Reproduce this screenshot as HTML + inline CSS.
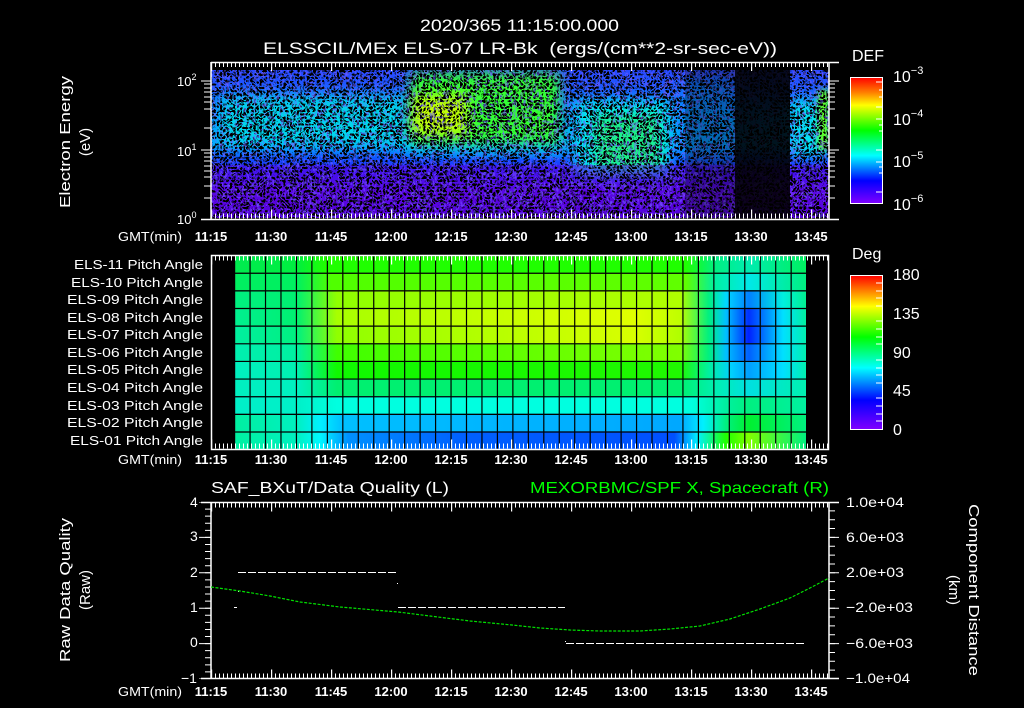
<!DOCTYPE html>
<html><head><meta charset="utf-8"><style>
html,body{margin:0;padding:0;background:#000;width:1024px;height:708px;overflow:hidden}
svg{display:block}
text{font-family:"Liberation Sans",sans-serif;fill:#fff}
</style></head><body>
<svg width="1024" height="708" viewBox="0 0 1024 708" xmlns="http://www.w3.org/2000/svg">
<defs>
<linearGradient id="cbDEF" x1="0" y1="0" x2="0" y2="1">
<stop offset="0" stop-color="#ff0000"/><stop offset="0.12" stop-color="#ff8000"/><stop offset="0.22" stop-color="#ffff00"/><stop offset="0.42" stop-color="#00ff00"/><stop offset="0.62" stop-color="#00ffff"/><stop offset="0.82" stop-color="#0000ff"/><stop offset="1" stop-color="#8000ff"/></linearGradient>
<linearGradient id="cbDeg" x1="0" y1="0" x2="0" y2="1">
<stop offset="0" stop-color="#ff0000"/><stop offset="0.1" stop-color="#ff8000"/><stop offset="0.2" stop-color="#ffff00"/><stop offset="0.4" stop-color="#00ff00"/><stop offset="0.6" stop-color="#00ffff"/><stop offset="0.81" stop-color="#0000ff"/><stop offset="1" stop-color="#8000ff"/></linearGradient>
<linearGradient id="specBase" x1="0" y1="70" x2="0" y2="218" gradientUnits="userSpaceOnUse">
<stop offset="0" stop-color="#2848ff"/><stop offset="0.15" stop-color="#1a5cff"/><stop offset="0.3" stop-color="#0090ff"/><stop offset="0.5" stop-color="#00a8ff"/><stop offset="0.6" stop-color="#1050ff"/><stop offset="0.7" stop-color="#3020f8"/><stop offset="0.82" stop-color="#5a10e8"/><stop offset="1" stop-color="#5000d8"/></linearGradient>
<filter id="b6" x="-30%" y="-30%" width="160%" height="160%"><feGaussianBlur stdDeviation="6"/></filter>
<filter id="b3" x="-30%" y="-30%" width="160%" height="160%"><feGaussianBlur stdDeviation="3"/></filter>
<filter id="nz1" filterUnits="userSpaceOnUse" x="211" y="70" width="618" height="150">
<feTurbulence type="turbulence" baseFrequency="0.35 0.3" numOctaves="1" seed="3"/>
<feColorMatrix values="0 0 0 0 0 0 0 0 0 0 0 0 0 0 0 3 0 0 0 -0.2"/>
<feComponentTransfer><feFuncA type="discrete" tableValues="0 0 0 0 0.9"/></feComponentTransfer></filter>
<filter id="nz2" filterUnits="userSpaceOnUse" x="211" y="70" width="618" height="150">
<feTurbulence type="turbulence" baseFrequency="0.3 0.3" numOctaves="1" seed="7"/>
<feColorMatrix values="0 0 0 0 0 0 0 0 0 0 0 0 0 0 0 3 0 0 0 -0.1"/>
<feComponentTransfer><feFuncA type="discrete" tableValues="0 0 1 1"/></feComponentTransfer></filter>
<filter id="nz4" filterUnits="userSpaceOnUse" x="211" y="70" width="618" height="150">
<feTurbulence type="turbulence" baseFrequency="0.3 0.25" numOctaves="1" seed="19"/>
<feColorMatrix values="0 0 0 0 0.15 0 0 0 0 0.1 0 0 0 0 1 3 0 0 0 -0.2"/>
<feComponentTransfer><feFuncA type="discrete" tableValues="0 0 0 1"/></feComponentTransfer></filter>
<filter id="nz3" filterUnits="userSpaceOnUse" x="211" y="70" width="618" height="150">
<feTurbulence type="turbulence" baseFrequency="0.4 0.1" numOctaves="1" seed="11"/>
<feColorMatrix values="0 0 0 0 0.2 0 0 0 0 0.1 0 0 0 0 1 3 0 0 0 -0.3"/>
<feComponentTransfer><feFuncA type="discrete" tableValues="0 0 0 0.5"/></feComponentTransfer></filter>
<clipPath id="spClip"><rect x="211" y="70" width="618" height="148"/></clipPath>
<linearGradient id="r1" x1="234" x2="806" gradientUnits="userSpaceOnUse"><stop offset="0" stop-color="#00ec50"/><stop offset="0.11" stop-color="#00ee40"/><stop offset="0.16" stop-color="#20ff00"/><stop offset="0.79" stop-color="#20ff00"/><stop offset="0.84" stop-color="#00f080"/><stop offset="0.9" stop-color="#00ecb0"/><stop offset="1" stop-color="#00f060"/></linearGradient>
<linearGradient id="r2" x1="234" x2="806" gradientUnits="userSpaceOnUse"><stop offset="0" stop-color="#00f060"/><stop offset="0.11" stop-color="#00f060"/><stop offset="0.17" stop-color="#50ff00"/><stop offset="0.79" stop-color="#60ff00"/><stop offset="0.84" stop-color="#00f0a0"/><stop offset="0.9" stop-color="#00e8e8"/><stop offset="1" stop-color="#00f080"/></linearGradient>
<linearGradient id="r3" x1="234" x2="806" gradientUnits="userSpaceOnUse"><stop offset="0" stop-color="#00f080"/><stop offset="0.11" stop-color="#00f070"/><stop offset="0.18" stop-color="#90ff00"/><stop offset="0.78" stop-color="#b0ff00"/><stop offset="0.83" stop-color="#00f080"/><stop offset="0.86" stop-color="#00d8ff"/><stop offset="0.9" stop-color="#0080ff"/><stop offset="0.96" stop-color="#00f0e0"/><stop offset="1" stop-color="#00f090"/></linearGradient>
<linearGradient id="r4" x1="234" x2="806" gradientUnits="userSpaceOnUse"><stop offset="0" stop-color="#00f090"/><stop offset="0.11" stop-color="#00f070"/><stop offset="0.18" stop-color="#a8ff00"/><stop offset="0.7" stop-color="#e0ff00"/><stop offset="0.78" stop-color="#c0ff00"/><stop offset="0.83" stop-color="#00f080"/><stop offset="0.86" stop-color="#00c0ff"/><stop offset="0.9" stop-color="#0030ff"/><stop offset="0.96" stop-color="#00e0ff"/><stop offset="1" stop-color="#00f0a0"/></linearGradient>
<linearGradient id="r5" x1="234" x2="806" gradientUnits="userSpaceOnUse"><stop offset="0" stop-color="#00f0a0"/><stop offset="0.11" stop-color="#00f080"/><stop offset="0.18" stop-color="#90ff00"/><stop offset="0.7" stop-color="#d8ff00"/><stop offset="0.78" stop-color="#b0ff00"/><stop offset="0.83" stop-color="#00f080"/><stop offset="0.86" stop-color="#00c0ff"/><stop offset="0.9" stop-color="#0020ff"/><stop offset="0.96" stop-color="#00e0ff"/><stop offset="1" stop-color="#00f0b0"/></linearGradient>
<linearGradient id="r6" x1="234" x2="806" gradientUnits="userSpaceOnUse"><stop offset="0" stop-color="#00f0b0"/><stop offset="0.11" stop-color="#00f0a0"/><stop offset="0.18" stop-color="#40ff00"/><stop offset="0.78" stop-color="#80ff00"/><stop offset="0.83" stop-color="#00f080"/><stop offset="0.86" stop-color="#00c0ff"/><stop offset="0.9" stop-color="#0060ff"/><stop offset="0.96" stop-color="#00e0ff"/><stop offset="1" stop-color="#00f0b0"/></linearGradient>
<linearGradient id="r7" x1="234" x2="806" gradientUnits="userSpaceOnUse"><stop offset="0" stop-color="#00f0c0"/><stop offset="0.11" stop-color="#00f0b0"/><stop offset="0.18" stop-color="#10f800"/><stop offset="0.78" stop-color="#20f800"/><stop offset="0.83" stop-color="#00f0a0"/><stop offset="0.87" stop-color="#00d0ff"/><stop offset="0.9" stop-color="#00a0ff"/><stop offset="0.96" stop-color="#00e0ff"/><stop offset="1" stop-color="#00f0b0"/></linearGradient>
<linearGradient id="r8" x1="234" x2="806" gradientUnits="userSpaceOnUse"><stop offset="0" stop-color="#00f0c0"/><stop offset="0.11" stop-color="#00f0c0"/><stop offset="0.18" stop-color="#00f070"/><stop offset="0.78" stop-color="#00f070"/><stop offset="0.84" stop-color="#00f0b0"/><stop offset="0.9" stop-color="#00e0e0"/><stop offset="1" stop-color="#00f0b0"/></linearGradient>
<linearGradient id="r9" x1="234" x2="806" gradientUnits="userSpaceOnUse"><stop offset="0" stop-color="#00f0c8"/><stop offset="0.11" stop-color="#00f0c8"/><stop offset="0.18" stop-color="#00ffe0"/><stop offset="0.8" stop-color="#00ffe0"/><stop offset="0.86" stop-color="#00f0a0"/><stop offset="0.9" stop-color="#00f080"/><stop offset="1" stop-color="#00f0a0"/></linearGradient>
<linearGradient id="r10" x1="234" x2="806" gradientUnits="userSpaceOnUse"><stop offset="0" stop-color="#00f0a0"/><stop offset="0.11" stop-color="#00f0c0"/><stop offset="0.15" stop-color="#00f0ff"/><stop offset="0.19" stop-color="#00c0ff"/><stop offset="0.78" stop-color="#00a8ff"/><stop offset="0.82" stop-color="#00f0ff"/><stop offset="0.86" stop-color="#00f080"/><stop offset="0.9" stop-color="#00f030"/><stop offset="1" stop-color="#00f080"/></linearGradient>
<linearGradient id="r11" x1="234" x2="806" gradientUnits="userSpaceOnUse"><stop offset="0" stop-color="#00f0a0"/><stop offset="0.11" stop-color="#00f0c0"/><stop offset="0.15" stop-color="#00f8ff"/><stop offset="0.2" stop-color="#0090ff"/><stop offset="0.4" stop-color="#0060ff"/><stop offset="0.77" stop-color="#0050ff"/><stop offset="0.81" stop-color="#00f0ff"/><stop offset="0.86" stop-color="#20ff00"/><stop offset="0.9" stop-color="#80ff00"/><stop offset="1" stop-color="#00f080"/></linearGradient>
</defs>

<text x="420" y="31" font-size="17" textLength="199" lengthAdjust="spacingAndGlyphs">2020/365 11:15:00.000</text>
<text x="263" y="54" font-size="17" textLength="514" lengthAdjust="spacingAndGlyphs" xml:space="preserve">ELSSCIL/MEx ELS-07 LR-Bk  (ergs/(cm**2-sr-sec-eV))</text>

<g clip-path="url(#spClip)">
<rect x="211" y="70" width="618" height="148" fill="url(#specBase)"/>
<rect x="220" y="95" width="185" height="50" fill="#00e0e8" filter="url(#b6)" opacity="0.85"/>
<rect x="405" y="140" width="160" height="15" fill="#00c8ff" filter="url(#b6)" opacity="0.7"/>
<rect x="575" y="100" width="95" height="75" fill="#00e8f0" filter="url(#b6)"/>
<rect x="595" y="115" width="65" height="55" fill="#20f070" filter="url(#b6)" opacity="0.8"/>
<rect x="410" y="72" width="150" height="72" fill="#30ff30" filter="url(#b6)"/>
<rect x="412" y="95" width="55" height="40" fill="#d0ff00" filter="url(#b6)" opacity="0.9"/>
<rect x="680" y="80" width="55" height="80" fill="#0090ff" filter="url(#b6)" opacity="0.6"/>
<rect x="790" y="100" width="39" height="55" fill="#00e0f0" filter="url(#b6)"/>
<rect x="818" y="90" width="11" height="60" fill="#60ff20" filter="url(#b3)"/>
<rect x="211" y="165" width="618" height="55" fill="#5a00e0" opacity="0.5"/>
<rect x="211" y="70" width="618" height="150" filter="url(#nz3)"/>
<rect x="211" y="168" width="618" height="52" filter="url(#nz2)"/>
<rect x="211" y="160" width="618" height="60" filter="url(#nz4)" opacity="0.6"/>
<rect x="211" y="70" width="618" height="100" filter="url(#nz1)" opacity="0.6"/>
<rect x="735" y="70" width="55" height="148" fill="#000" opacity="0.88"/>
<rect x="685" y="70" width="50" height="148" fill="#000" opacity="0.3"/>
</g>
<g stroke="#fff" fill="none">
<line x1="211" y1="62.5" x2="839" y2="62.5" stroke-width="1.5"/>
<line x1="201" y1="219.5" x2="839" y2="219.5" stroke-width="1.5"/>
<line x1="211" y1="62" x2="211" y2="220" stroke-width="1.5"/>
<line x1="829" y1="62" x2="829" y2="220" stroke-width="1.5"/>
<line x1="211" y1="65" x2="829" y2="65" stroke-width="4" stroke-dasharray="1 3"/>
<line x1="211" y1="67" x2="829" y2="67" stroke-width="8" stroke-dasharray="1.2 58.8"/>
<line x1="211" y1="216" x2="829" y2="216" stroke-width="5" stroke-dasharray="1 3"/>
<line x1="211" y1="214" x2="829" y2="214" stroke-width="9" stroke-dasharray="1.2 58.8"/>
<path d="M201 81H211M201 150H211M204 171H211M204 128H211M204 109H211M204 97H211M204 92H211M204 88H211M204 84H211M204 198H211M204 186H211M204 177H211M204 166H211M204 161H211M204 157H211M204 153H211M204 102H211"/>
<path d="M829 81H839M829 150H839M829 171H835M829 128H835M829 109H835M829 97H835M829 92H835M829 88H835M829 84H835M829 198H835M829 186H835M829 177H835M829 166H835M829 161H835M829 157H835M829 153H835M829 102H835"/>
</g>
<g font-size="13">
<text x="177" y="86">10<tspan font-size="9" dy="-6">2</tspan></text>
<text x="177" y="156">10<tspan font-size="9" dy="-6">1</tspan></text>
<text x="177" y="224">10<tspan font-size="9" dy="-6">0</tspan></text>
</g>
<text transform="translate(70,142) rotate(-90)" font-size="15" text-anchor="middle" textLength="132" lengthAdjust="spacingAndGlyphs">Electron Energy</text>
<text transform="translate(90,142) rotate(-90)" font-size="15" text-anchor="middle">(eV)</text>

<text x="852" y="61" font-size="16">DEF</text>
<rect x="850.5" y="77.5" width="32" height="126" fill="url(#cbDEF)" stroke="#fff"/>
<path d="M876 82H882M879 90H882M879 97H882M876 107H882M876 119H882M879 125H882M879 131H882M876 150H882M876 162H882M879 167H882M879 173H882M876 192H882" stroke="#fff"/>
<g font-size="16">
<text x="893" y="82">10<tspan font-size="11" dy="-8">−3</tspan></text>
<text x="893" y="125">10<tspan font-size="11" dy="-8">−4</tspan></text>
<text x="893" y="167">10<tspan font-size="11" dy="-8">−5</tspan></text>
<text x="893" y="210">10<tspan font-size="11" dy="-8">−6</tspan></text>
</g>

<g font-size="13" font-weight="bold" text-anchor="middle">
<text x="211" y="241">11:15</text><text x="271" y="241">11:30</text><text x="331" y="241">11:45</text><text x="391" y="241">12:00</text><text x="451" y="241">12:15</text><text x="511" y="241">12:30</text><text x="571" y="241">12:45</text><text x="631" y="241">13:00</text><text x="691" y="241">13:15</text><text x="751" y="241">13:30</text><text x="811" y="241">13:45</text>
</g>
<text x="118" y="241" font-size="13" textLength="64" lengthAdjust="spacingAndGlyphs">GMT(min)</text>

<g>
<rect x="234" y="255" width="572" height="17.7" fill="url(#r1)"/>
<rect x="234" y="272.6" width="572" height="17.7" fill="url(#r2)"/>
<rect x="234" y="290.3" width="572" height="17.7" fill="url(#r3)"/>
<rect x="234" y="307.9" width="572" height="17.7" fill="url(#r4)"/>
<rect x="234" y="325.6" width="572" height="17.7" fill="url(#r5)"/>
<rect x="234" y="343.2" width="572" height="17.7" fill="url(#r6)"/>
<rect x="234" y="360.8" width="572" height="17.7" fill="url(#r7)"/>
<rect x="234" y="378.5" width="572" height="17.7" fill="url(#r8)"/>
<rect x="234" y="396.1" width="572" height="17.7" fill="url(#r9)"/>
<rect x="234" y="413.8" width="572" height="17.7" fill="url(#r10)"/>
<rect x="234" y="431.4" width="572" height="17.6" fill="url(#r11)"/>
<line x1="234" y1="352" x2="806" y2="352" stroke="#000" stroke-width="194" stroke-dasharray="1.2 14.26"/>
<line x1="520" y1="255" x2="520" y2="449" stroke="#000" stroke-width="572" stroke-dasharray="1.2 16.44"/>
</g>
<g stroke="#fff" fill="none">
<rect x="211.5" y="255.5" width="617" height="194" stroke-width="1.5"/>
<line x1="211" y1="258" x2="829" y2="258" stroke-width="5" stroke-dasharray="1 3"/>
<line x1="211" y1="260" x2="829" y2="260" stroke-width="9" stroke-dasharray="1.2 58.8"/>
<line x1="211" y1="446" x2="829" y2="446" stroke-width="5" stroke-dasharray="1 3"/>
<line x1="211" y1="444" x2="829" y2="444" stroke-width="9" stroke-dasharray="1.2 58.8"/>
</g>
<g font-size="13" text-anchor="end">
<text x="203" y="269" textLength="129" lengthAdjust="spacingAndGlyphs">ELS-11 Pitch Angle</text>
<text x="203" y="287" textLength="132" lengthAdjust="spacingAndGlyphs">ELS-10 Pitch Angle</text>
<text x="203" y="304" textLength="136" lengthAdjust="spacingAndGlyphs">ELS-09 Pitch Angle</text>
<text x="203" y="322" textLength="136" lengthAdjust="spacingAndGlyphs">ELS-08 Pitch Angle</text>
<text x="203" y="339" textLength="136" lengthAdjust="spacingAndGlyphs">ELS-07 Pitch Angle</text>
<text x="203" y="357" textLength="136" lengthAdjust="spacingAndGlyphs">ELS-06 Pitch Angle</text>
<text x="203" y="374" textLength="136" lengthAdjust="spacingAndGlyphs">ELS-05 Pitch Angle</text>
<text x="203" y="392" textLength="136" lengthAdjust="spacingAndGlyphs">ELS-04 Pitch Angle</text>
<text x="203" y="410" textLength="136" lengthAdjust="spacingAndGlyphs">ELS-03 Pitch Angle</text>
<text x="203" y="427" textLength="136" lengthAdjust="spacingAndGlyphs">ELS-02 Pitch Angle</text>
<text x="203" y="445" textLength="133" lengthAdjust="spacingAndGlyphs">ELS-01 Pitch Angle</text>
</g>
<text x="852" y="259" font-size="16">Deg</text>
<rect x="850.5" y="275.5" width="32" height="154" fill="url(#cbDeg)" stroke="#fff"/>
<path d="M876 283H882M876 291H882M876 298H882M876 306H882M876 321H882M876 329H882M876 337H882M876 344H882M876 360H882M876 368H882M876 375H882M876 383H882M876 398H882M876 406H882M876 414H882M876 421H882" stroke="#fff"/>
<g font-size="16">
<text x="893" y="280">180</text><text x="893" y="319">135</text><text x="893" y="358">90</text><text x="893" y="396">45</text><text x="893" y="435">0</text>
</g>
<g font-size="13" font-weight="bold" text-anchor="middle">
<text x="211" y="464">11:15</text><text x="271" y="464">11:30</text><text x="331" y="464">11:45</text><text x="391" y="464">12:00</text><text x="451" y="464">12:15</text><text x="511" y="464">12:30</text><text x="571" y="464">12:45</text><text x="631" y="464">13:00</text><text x="691" y="464">13:15</text><text x="751" y="464">13:30</text><text x="811" y="464">13:45</text>
</g>
<text x="118" y="464" font-size="13" textLength="64" lengthAdjust="spacingAndGlyphs">GMT(min)</text>

<text x="211" y="493" font-size="16" textLength="238" lengthAdjust="spacingAndGlyphs">SAF_BXuT/Data Quality (L)</text>
<text x="829" y="493" font-size="16" style="fill:#00ff00" text-anchor="end" textLength="299" lengthAdjust="spacingAndGlyphs">MEXORBMC/SPF X, Spacecraft (R)</text>
<g stroke="#fff" fill="none">
<line x1="201" y1="502.5" x2="839" y2="502.5" stroke-width="1.5"/>
<line x1="201" y1="678.5" x2="839" y2="678.5" stroke-width="1.5"/>
<line x1="211" y1="502" x2="211" y2="679" stroke-width="1.5"/>
<line x1="829" y1="502" x2="829" y2="679" stroke-width="1.5"/>
<line x1="211" y1="505" x2="829" y2="505" stroke-width="5" stroke-dasharray="1 3"/>
<line x1="211" y1="507" x2="829" y2="507" stroke-width="9" stroke-dasharray="1.2 58.8"/>
<line x1="211" y1="676" x2="829" y2="676" stroke-width="5" stroke-dasharray="1 3"/>
<line x1="211" y1="674" x2="829" y2="674" stroke-width="9" stroke-dasharray="1.2 58.8"/>
<line x1="205" y1="502" x2="205" y2="679" stroke-width="12" stroke-dasharray="1 34.4" stroke-dashoffset="0.5"/>
<line x1="208" y1="502" x2="208" y2="679" stroke-width="6" stroke-dasharray="1 6.08" stroke-dashoffset="0.5"/>
<line x1="834" y1="502" x2="834" y2="679" stroke-width="10" stroke-dasharray="1 34.4" stroke-dashoffset="0.5"/>
<line x1="832" y1="502" x2="832" y2="679" stroke-width="6" stroke-dasharray="1 7.85" stroke-dashoffset="0.5"/>
<line x1="238" y1="572.5" x2="397" y2="572.5" stroke-dasharray="8 2"/>
<line x1="398" y1="607.5" x2="565" y2="607.5" stroke-dasharray="8 2"/>
<line x1="566" y1="643.5" x2="806" y2="643.5" stroke-dasharray="8 2"/>
<path d="M234 607.5H237M397 583.5H398M565 641.5H566M238 591.5H239"/>
</g>
<polyline fill="none" stroke="#00e000" stroke-width="1.2" stroke-dasharray="3 1.5" points="211,587 240,591 270,596 300,602 340,607 398,612 430,616 470,621 512,625 540,628 570,630 600,631 640,631 670,629 700,626 730,619 760,609 790,598 810,588 829,578"/>
<g font-size="14">
<text x="190" y="507">4</text><text x="190" y="541">3</text><text x="190" y="577">2</text><text x="190" y="612">1</text><text x="190" y="647">0</text><text x="181" y="683">−1</text>
</g>
<g font-size="14">
<text x="846" y="507" textLength="58" lengthAdjust="spacingAndGlyphs">1.0e+04</text>
<text x="846" y="542" textLength="58" lengthAdjust="spacingAndGlyphs">6.0e+03</text>
<text x="846" y="577" textLength="58" lengthAdjust="spacingAndGlyphs">2.0e+03</text>
<text x="846" y="612" textLength="67" lengthAdjust="spacingAndGlyphs">−2.0e+03</text>
<text x="846" y="648" textLength="67" lengthAdjust="spacingAndGlyphs">−6.0e+03</text>
<text x="846" y="683" textLength="64" lengthAdjust="spacingAndGlyphs">−1.0e+04</text>
</g>
<text transform="translate(70,590) rotate(-90)" font-size="15" text-anchor="middle" textLength="144" lengthAdjust="spacingAndGlyphs">Raw Data Quality</text>
<text transform="translate(90,590) rotate(-90)" font-size="15" text-anchor="middle">(Raw)</text>
<text transform="translate(969,590) rotate(90)" font-size="15" text-anchor="middle" textLength="172" lengthAdjust="spacingAndGlyphs">Component Distance</text>
<text transform="translate(949,590) rotate(90)" font-size="15" text-anchor="middle">(km)</text>
<g font-size="13" font-weight="bold" text-anchor="middle">
<text x="211" y="696">11:15</text><text x="271" y="696">11:30</text><text x="331" y="696">11:45</text><text x="391" y="696">12:00</text><text x="451" y="696">12:15</text><text x="511" y="696">12:30</text><text x="571" y="696">12:45</text><text x="631" y="696">13:00</text><text x="691" y="696">13:15</text><text x="751" y="696">13:30</text><text x="811" y="696">13:45</text>
</g>
<text x="118" y="696" font-size="13" textLength="64" lengthAdjust="spacingAndGlyphs">GMT(min)</text>
</svg>
</body></html>
